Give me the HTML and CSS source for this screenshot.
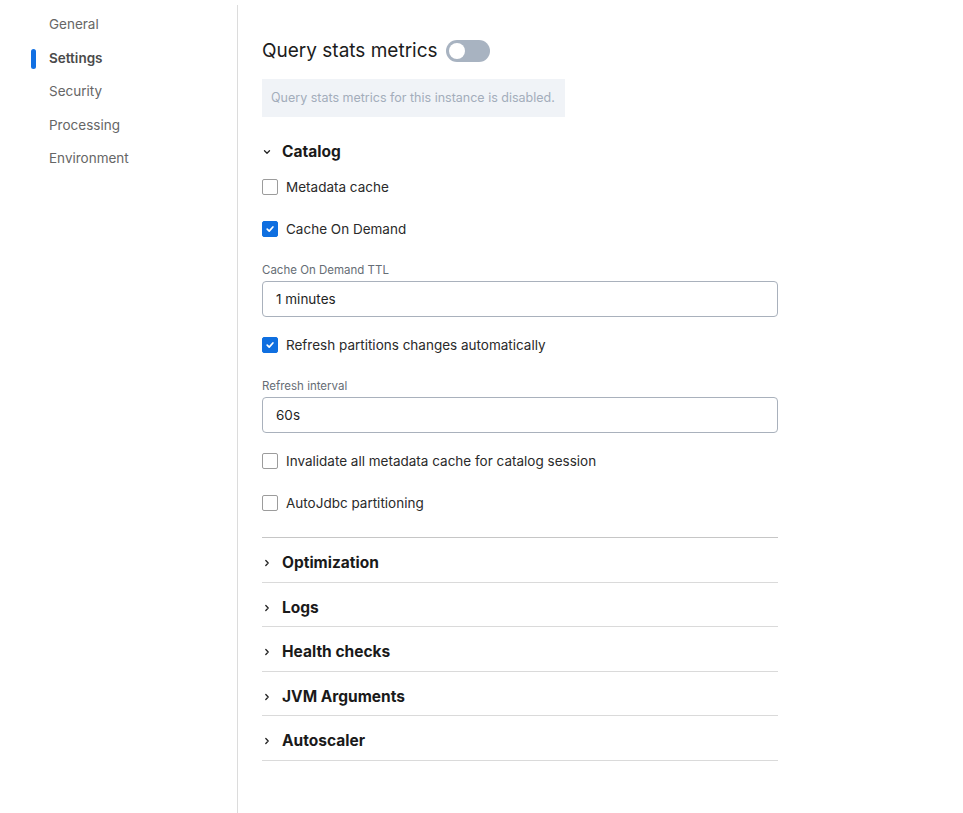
FILE: index.html
```html
<!DOCTYPE html>
<html lang="en">
<head>
<meta charset="utf-8">
<title>Settings</title>
<link rel="stylesheet" href="styles.css">
</head>
<body>
<div class="layout">
  <nav class="sidebar">
    <ul class="nav">
      <li class="nav-item">General</li>
      <li class="nav-item active">Settings</li>
      <li class="nav-item">Security</li>
      <li class="nav-item">Processing</li>
      <li class="nav-item">Environment</li>
    </ul>
  </nav>
  <main class="main">
    <div class="content">
      <div class="title-row">
        <h1 class="title">Query stats metrics</h1>
        <span class="toggle"><span class="knob"></span></span>
      </div>
      <div class="info">Query stats metrics for this instance is disabled.</div>

      <section class="section open">
        <div class="section-head">
          <svg class="chev" width="8" height="8" viewBox="0 0 8 8"><path d="M1.5 2.8 L4 5.2 L6.5 2.8" fill="none" stroke="#222" stroke-width="1.3" stroke-linecap="round" stroke-linejoin="round"/></svg>
          <span>Catalog</span>
        </div>
        <div class="section-body">
          <label class="check first"><span class="box"></span>Metadata cache</label>
          <label class="check"><span class="box checked"><svg width="10" height="10" viewBox="0 0 10 10"><path d="M2.2 5.2 L4.2 7.1 L7.9 3" fill="none" stroke="#fff" stroke-width="1.7" stroke-linecap="round" stroke-linejoin="round"/></svg></span>Cache On Demand</label>
          <div class="field">
            <div class="field-label">Cache On Demand TTL</div>
            <div class="input">1 minutes</div>
          </div>
          <label class="check after-field"><span class="box checked"><svg width="10" height="10" viewBox="0 0 10 10"><path d="M2.2 5.2 L4.2 7.1 L7.9 3" fill="none" stroke="#fff" stroke-width="1.7" stroke-linecap="round" stroke-linejoin="round"/></svg></span>Refresh partitions changes automatically</label>
          <div class="field">
            <div class="field-label">Refresh interval</div>
            <div class="input">60s</div>
          </div>
          <label class="check after-field"><span class="box"></span>Invalidate all metadata cache for catalog session</label>
          <label class="check"><span class="box"></span>AutoJdbc partitioning</label>
        </div>
      </section>

      <section class="section">
        <div class="section-head">
          <svg class="chev" width="8" height="8" viewBox="0 0 8 8"><path d="M2.8 1.5 L5.2 4 L2.8 6.5" fill="none" stroke="#222" stroke-width="1.3" stroke-linecap="round" stroke-linejoin="round"/></svg>
          <span>Optimization</span>
        </div>
      </section>
      <section class="section">
        <div class="section-head">
          <svg class="chev" width="8" height="8" viewBox="0 0 8 8"><path d="M2.8 1.5 L5.2 4 L2.8 6.5" fill="none" stroke="#222" stroke-width="1.3" stroke-linecap="round" stroke-linejoin="round"/></svg>
          <span>Logs</span>
        </div>
      </section>
      <section class="section">
        <div class="section-head">
          <svg class="chev" width="8" height="8" viewBox="0 0 8 8"><path d="M2.8 1.5 L5.2 4 L2.8 6.5" fill="none" stroke="#222" stroke-width="1.3" stroke-linecap="round" stroke-linejoin="round"/></svg>
          <span>Health checks</span>
        </div>
      </section>
      <section class="section">
        <div class="section-head">
          <svg class="chev" width="8" height="8" viewBox="0 0 8 8"><path d="M2.8 1.5 L5.2 4 L2.8 6.5" fill="none" stroke="#222" stroke-width="1.3" stroke-linecap="round" stroke-linejoin="round"/></svg>
          <span>JVM Arguments</span>
        </div>
      </section>
      <section class="section">
        <div class="section-head">
          <svg class="chev" width="8" height="8" viewBox="0 0 8 8"><path d="M2.8 1.5 L5.2 4 L2.8 6.5" fill="none" stroke="#222" stroke-width="1.3" stroke-linecap="round" stroke-linejoin="round"/></svg>
          <span>Autoscaler</span>
        </div>
      </section>
    </div>
  </main>
</div>
</body>
</html>
```
FILE: styles.css
```css
* { box-sizing: border-box; }
html, body { margin: 0; padding: 0; background: #fff; }
body {
  font-family: "Inter", "Noto Sans", "Liberation Sans", sans-serif;
  color: #1f1f1f;
  height: 813px;
  overflow: hidden;
}
.layout {
  display: flex;
  height: 100%;
  padding-top: 5px;
}
.sidebar {
  width: 238px;
  flex: none;
  border-right: 1px solid #dcdcdc;
}
.nav {
  list-style: none;
  margin: 0;
  padding: 3px 0 0 0;
}
.nav-item {
  position: relative;
  height: 33.6px;
  line-height: 33.6px;
  padding-left: 49px;
  font-size: 13.5px;
  color: #666;
}
.nav-item.active {
  color: #4a4a4a;
  font-weight: 600;
}
.nav-item.active::before {
  content: "";
  position: absolute;
  left: 31px;
  top: 7px;
  width: 5px;
  height: 20px;
  border-radius: 3px;
  background: #1270e3;
}
.main {
  flex: 1;
  padding-left: 24px;
}
.content {
  width: 516px;
}
.title-row {
  display: flex;
  align-items: center;
  gap: 8px;
  margin-top: 32px;
  height: 28px;
}
.title {
  margin: 0;
  font-size: 19px;
  font-weight: 400;
  line-height: 28px;
  color: #1c1c1c;
}
.toggle {
  position: relative;
  width: 44px;
  height: 22px;
  border-radius: 11px;
  background: #a8b3c1;
}
.knob {
  position: absolute;
  left: 3px;
  top: 3px;
  width: 16px;
  height: 16px;
  border-radius: 50%;
  background: #fff;
}
.info {
  margin-top: 14px;
  background: #f0f3f7;
  padding: 10px 9px;
  line-height: 18px;
  font-size: 12.5px;
  color: #a3adbb;
  width: 303px;
}
.section {
  border-bottom: 1px solid #dadada;
}
.section.open {
  margin-top: 14px;
  border-bottom-color: #c6c6c6;
}
.section-head {
  display: flex;
  align-items: center;
  gap: 11px;
  padding: 13px 0 6.6px 1px;
  line-height: 24px;
  font-size: 15.5px;
  font-weight: 700;
  color: #1a1a1a;
}
.section.open .section-head {
  padding-top: 9px;
  padding-bottom: 0;
}
.chev { flex: none; }
.section-body {
  padding-bottom: 24px;
}
.check {
  display: flex;
  align-items: center;
  gap: 8px;
  height: 20px;
  margin-top: 22px;
  font-size: 13.5px;
  color: #2a2a2a;
}
.check.first { margin-top: 13px; }
.check.after-field { margin-top: 18px; }
.box {
  width: 16px;
  height: 16px;
  flex: none;
  border: 1px solid #9c9c9c;
  border-radius: 2px;
  background: #fff;
  display: flex;
  align-items: center;
  justify-content: center;
}
.box.checked {
  background: #0f6fe0;
  border-color: #0f6fe0;
}
.field {
  margin-top: 22px;
}
.field-label {
  font-size: 11.5px;
  line-height: 18px;
  color: #666d75;
  margin-bottom: 2px;
}
.input {
  height: 36px;
  border: 1px solid #a9b1bc;
  border-radius: 4px;
  padding: 0 13px;
  line-height: 34px;
  font-size: 13.5px;
  color: #1f1f1f;
}
```
